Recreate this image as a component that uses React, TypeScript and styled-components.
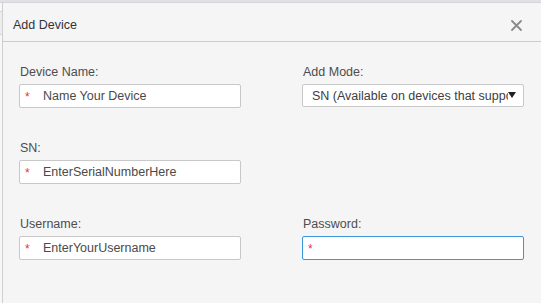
import styled, { createGlobalStyle } from "styled-components";

// ---------- Global ----------

const GlobalStyle = createGlobalStyle`
  html, body {
    margin: 0;
    padding: 0;
    background: #f5f5f5;
  }
  body {
    font-family: "Liberation Sans", Arial, sans-serif;
    color: #4a4a4a;
  }
  * {
    box-sizing: border-box;
  }
`;

// ---------- Styled Components ----------

const Page = styled.div`
  width: 541px;
  height: 303px;
  overflow: hidden;
  display: flex;
  flex-direction: column;
  background: #f5f5f5;
`;

const TopStrip = styled.div`
  height: 3px;
  background: #dfe1e5;
  border-bottom: 1px solid #d3d5d9;
  flex-shrink: 0;
`;

const Frame = styled.div`
  flex: 1;
  display: flex;
`;

const Gutter = styled.div`
  width: 2px;
  flex-shrink: 0;
  background: #f7f7f7;
  display: flex;
  flex-direction: column;
`;

const GutterTab = styled.div`
  margin-top: 8px;
  height: 24px;
  border-top: 1px solid #d6d6d6;
  border-bottom: 1px solid #d6d6d6;
  background: #ececec;
`;

const Dialog = styled.section`
  flex: 1;
  display: flex;
  flex-direction: column;
  border-left: 1px solid #cfcfcf;
  background: #f5f5f5;
`;

const Header = styled.header`
  height: 39px;
  display: flex;
  align-items: center;
  justify-content: space-between;
  padding: 6px 18px 0 10px;
  border-bottom: 1px solid #cccccc;
  flex-shrink: 0;
`;

const Title = styled.h1`
  margin: 0;
  font-size: 12.5px;
  font-weight: 400;
  color: #333;
`;

const CloseButton = styled.button`
  width: 14px;
  height: 14px;
  padding: 0;
  border: none;
  background: none;
  display: flex;
  align-items: center;
  justify-content: center;
  cursor: pointer;
`;

const Body = styled.div`
  display: grid;
  grid-template-columns: 222px 222px;
  column-gap: 61px;
  row-gap: 32px;
  padding: 22px 17px 0 16px;
`;

const Field = styled.div<{ $col?: number }>`
  grid-column: ${(p) => p.$col ?? "auto"};
  display: flex;
  flex-direction: column;
  gap: 4px;
`;

const Label = styled.label`
  font-size: 12.5px;
  line-height: 16px;
  height: 16px;
  color: #4d4d4d;
  padding-left: 1px;
`;

const InputBox = styled.div<{ $focused?: boolean }>`
  height: 24px;
  display: flex;
  align-items: center;
  background: #fff;
  border: 1px solid ${(p) => (p.$focused ? "#3a97dc" : "#c8c8c8")};
  border-radius: 2px;
  padding-left: 5px;
`;

const Star = styled.span`
  width: 18px;
  flex-shrink: 0;
  color: #e8334a;
  font-size: 12px;
  line-height: 12px;
  margin-top: 2px;
`;

const Input = styled.input`
  flex: 1;
  min-width: 0;
  height: 100%;
  border: none;
  outline: none;
  background: transparent;
  padding: 0;
  font-family: "Liberation Sans", Arial, sans-serif;
  font-size: 12.5px;
  color: #4a4a4a;

  &::placeholder {
    color: #4a4a4a;
    opacity: 1;
  }
`;

const SelectBox = styled.div`
  height: 23px;
  display: flex;
  align-items: center;
  background: #fff;
  border: 1px solid #c8c8c8;
  border-radius: 2px;
  padding: 0 7px 0 9px;
  cursor: pointer;
`;

const SelectText = styled.span`
  flex: 1;
  overflow: hidden;
  white-space: nowrap;
  font-size: 12.5px;
  color: #404040;
`;

const Caret = styled.span`
  width: 0;
  height: 0;
  flex-shrink: 0;
  border-left: 4px solid transparent;
  border-right: 4px solid transparent;
  border-top: 6px solid #222;
  margin-top: -1px;
`;

// ---------- Component ----------

const App = () => {
  return (
    <>
      <GlobalStyle />
      <Page>
        <TopStrip />
        <Frame>
          <Gutter>
            <GutterTab />
          </Gutter>
          <Dialog>
            <Header>
              <Title>Add Device</Title>
              <CloseButton aria-label="Close">
                <svg width="11" height="11" viewBox="0 0 11 11">
                  <path d="M1 1 L10 10 M10 1 L1 10" stroke="#8a8a8a" strokeWidth="1.8" strokeLinecap="round" />
                </svg>
              </CloseButton>
            </Header>

            <Body>
              <Field>
                <Label>Device Name:</Label>
                <InputBox>
                  <Star>*</Star>
                  <Input placeholder="Name Your Device" />
                </InputBox>
              </Field>

              <Field>
                <Label>Add Mode:</Label>
                <SelectBox>
                  <SelectText>SN (Available on devices that support Cloud P2P)</SelectText>
                  <Caret />
                </SelectBox>
              </Field>

              <Field $col={1}>
                <Label>SN:</Label>
                <InputBox>
                  <Star>*</Star>
                  <Input placeholder="EnterSerialNumberHere" />
                </InputBox>
              </Field>

              <Field $col={1}>
                <Label>Username:</Label>
                <InputBox>
                  <Star>*</Star>
                  <Input placeholder="EnterYourUsername" />
                </InputBox>
              </Field>

              <Field>
                <Label>Password:</Label>
                <InputBox $focused>
                  <Star>*</Star>
                  <Input type="password" />
                </InputBox>
              </Field>
            </Body>
          </Dialog>
        </Frame>
      </Page>
    </>
  );
};

export default App;
